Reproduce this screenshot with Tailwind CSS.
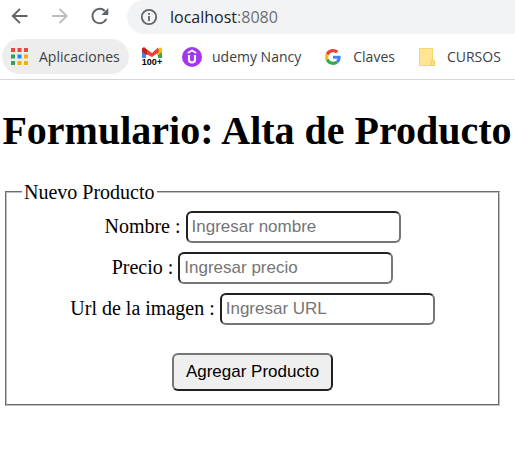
<!DOCTYPE html>
<html lang="es">
<head>
<meta charset="utf-8">
<title>Formulario: Alta de Producto</title>
<script src="https://cdn.jsdelivr.net/npm/@tailwindcss/browser@4"></script>
</head>
<body class="bg-white text-black overflow-x-hidden">
<header class="font-['Open_Sans',sans-serif] border-b border-[#d4d6d9]">
  <nav class="flex h-[34px] items-center" aria-label="Navegación">
    <button class="ml-2 size-6 text-[#5f6368]" aria-label="Atrás"><svg viewBox="0 0 24 24" class="size-6" fill="none" stroke="currentColor" stroke-width="1.9"><path d="M19.500 11H4.800M12 3.800 4.800 11l7.200 7.200"/></svg></button>
    <button class="ml-4 size-6 text-[#babcbe]" aria-label="Adelante"><svg viewBox="0 0 24 24" class="size-6" fill="none" stroke="currentColor" stroke-width="1.9"><path d="M4 11h14.700M11.500 3.800 18.700 11l-7.200 7.200"/></svg></button>
    <button class="ml-4 size-6 text-[#5f6368]" aria-label="Recargar"><svg viewBox="0 0 24 24" class="size-6" fill="none"><path d="M18.300 13.800A7.200 7.200 0 1 1 16.800 6" stroke="currentColor" stroke-width="2"/><path d="M20.300 3v7h-7z" fill="currentColor"/></svg></button>
    <div class="ml-[15px] flex h-full flex-1 items-center gap-3 rounded-l-full bg-[#f1f3f4] pl-[13px]">
      <svg viewBox="0 0 18 18" class="size-[18px] shrink-0 text-[#5f6368]" fill="none" stroke="currentColor"><circle cx="9" cy="9" r="7.200" stroke-width="1.800"/><path d="M9 8v5M9 5v1.800" stroke-width="1.800"/></svg>
      <span class="text-base leading-6 text-[#202124]">localhost<span class="text-[#6b6f73]">:8080</span></span>
    </div>
  </nav>
  <nav class="flex h-[45px] items-center whitespace-nowrap pl-0.5 text-sm text-[#3c4043]" aria-label="Marcadores">
    <a href="#" class="flex h-[35px] w-[127px] items-center gap-[11px] rounded-full bg-[#ededed] pl-[9px]">
      <svg viewBox="0 0 17 17" class="size-[17px] shrink-0"><g fill="#f0433a"><path d="M0 0h4v4H0zM6.500 0h4v4h-4zM13 0h4v4h-4z"/></g><path d="M0 6.500h4v4H0zM0 13h4v4H0z" fill="#34a05a"/><path d="M6.500 6.500h4v4h-4z" fill="#1e88f5"/><path d="M13 6.500h4v4h-4zM6.500 13h4v4h-4zM13 13h4v4h-4z" fill="#f7ad0c"/></svg>
      <span>Aplicaciones</span>
    </a>
    <a href="#" class="relative ml-[13px] size-5 shrink-0" aria-label="Gmail"><svg viewBox="0 0 20 20" class="size-5"><path d="M0 2h4v9H0z" fill="#4285f4"/><path d="M16 2h4v9h-4z" fill="#34a853"/><path d="M15 4l2.500-3.500Q20 0 20 2.500V5l-5 4z" fill="#fbbc04"/><path d="M0 5V2Q0 0 2.500.5L10 6l6-5.500 1 4.500-7 5z" fill="#ea4335"/><path d="M0 2.500Q0 0 2.500.5L5 3v5L0 5z" fill="#c5221f"/></svg><span class="absolute inset-x-0 bottom-0 flex justify-center font-['Liberation_Sans',sans-serif] text-[9px] font-bold leading-[10px] text-black">100+</span></a>
    <a href="#" class="ml-5 flex items-center gap-2.5">
      <svg viewBox="0 0 20 20" class="size-5"><circle cx="10" cy="10" r="10" fill="#a435f0"/><path d="M5.800 6 10 3.500 14.200 6" fill="none" stroke="#fff" stroke-width="1.800"/><path d="M7 8v4.500c0 4 6 4 6 0V8" fill="none" stroke="#fff" stroke-width="2.200"/></svg>
      <span>udemy Nancy</span>
    </a>
    <a href="#" class="ml-6 flex items-center gap-3">
      <svg viewBox="0 0 48 48" class="size-4"><path fill="#ea4335" d="M24 9.500c3.540 0 6.710 1.220 9.210 3.600l6.850-6.850C35.900 2.380 30.470 0 24 0 14.620 0 6.510 5.380 2.560 13.220l7.980 6.190C12.430 13.720 17.740 9.500 24 9.500z"/><path fill="#4285f4" d="M46.980 24.550c0-1.570-.15-3.090-.38-4.550H24v9.020h12.940c-.58 2.960-2.260 5.480-4.780 7.180l7.730 6c4.510-4.180 7.090-10.360 7.090-17.650z"/><path fill="#fbbc05" d="M10.530 28.590A14.500 14.500 0 0 1 9.770 24c0-1.600.27-3.140.76-4.590l-7.980-6.190A24 24 0 0 0 0 24c0 3.880.92 7.540 2.560 10.780z"/><path fill="#34a853" d="M24 48c6.480 0 11.930-2.130 15.890-5.810l-7.730-6c-2.150 1.450-4.920 2.300-8.160 2.300-6.260 0-11.570-4.220-13.470-9.910l-7.980 6.190C6.510 42.620 14.620 48 24 48z"/></svg>
      <span>Claves</span>
    </a>
    <a href="#" class="ml-6 flex items-center gap-3">
      <svg viewBox="0 0 16 18" class="h-[18px] w-4"><path d="M.5.5h13v17H.5z" fill="#ffe592" stroke="#f5d66b"/><path d="M12 17.500v-4q0-1.500 1.700-1.500t1.700 1.500v4z" fill="#ffe08a" stroke="#eec94f"/></svg>
      <span>CURSOS</span>
    </a>
  </nav>
</header>
<main class="pl-[5px] pr-[15px] font-['Liberation_Serif',serif] text-xl leading-6">
  <h1 class="-ml-[3px] -mr-3 mt-7 whitespace-nowrap text-center text-[40px] font-bold leading-[46px]">Formulario: Alta de Producto</h1>
  <form>
    <fieldset class="mt-[26px] border-2 border-[#c0c0c0] px-[15px] pb-[13px] [border-style:groove]">
      <legend class="px-0.5">Nuevo Producto</legend>
      <div class="mt-[7px] flex flex-col items-center gap-[9px]">
        <div class="flex items-center gap-[5px]"><label for="nombre" class="pb-0.5">Nombre :</label><input id="nombre" type="text" placeholder="Ingresar nombre" class="h-8 w-[215px] rounded-md border-2 border-[#767676] border-t-[#212121] border-l-[#212121] px-1 font-['Liberation_Sans',sans-serif] text-[17px] placeholder:text-[#757575]"></div>
        <div class="flex items-center gap-[5px]"><label for="precio" class="pb-0.5">Precio :</label><input id="precio" type="text" placeholder="Ingresar precio" class="h-8 w-[215px] rounded-md border-2 border-[#767676] border-t-[#212121] border-l-[#212121] px-1 font-['Liberation_Sans',sans-serif] text-[17px] placeholder:text-[#757575]"></div>
        <div class="flex items-center gap-[5px]"><label for="url" class="pb-0.5">Url de la imagen :</label><input id="url" type="text" placeholder="Ingresar URL" class="h-8 w-[215px] rounded-md border-2 border-[#767676] border-t-[#212121] border-l-[#212121] px-1 font-['Liberation_Sans',sans-serif] text-[17px] placeholder:text-[#757575]"></div>
        <button type="button" class="mt-[19px] h-[38px] rounded-md border-2 border-[#212121] border-t-[#767676] border-l-[#767676] bg-[#efefef] px-3 font-['Liberation_Sans',sans-serif] text-[17px]">Agregar Producto</button>
      </div>
    </fieldset>
  </form>
</main>
</body>
</html>
